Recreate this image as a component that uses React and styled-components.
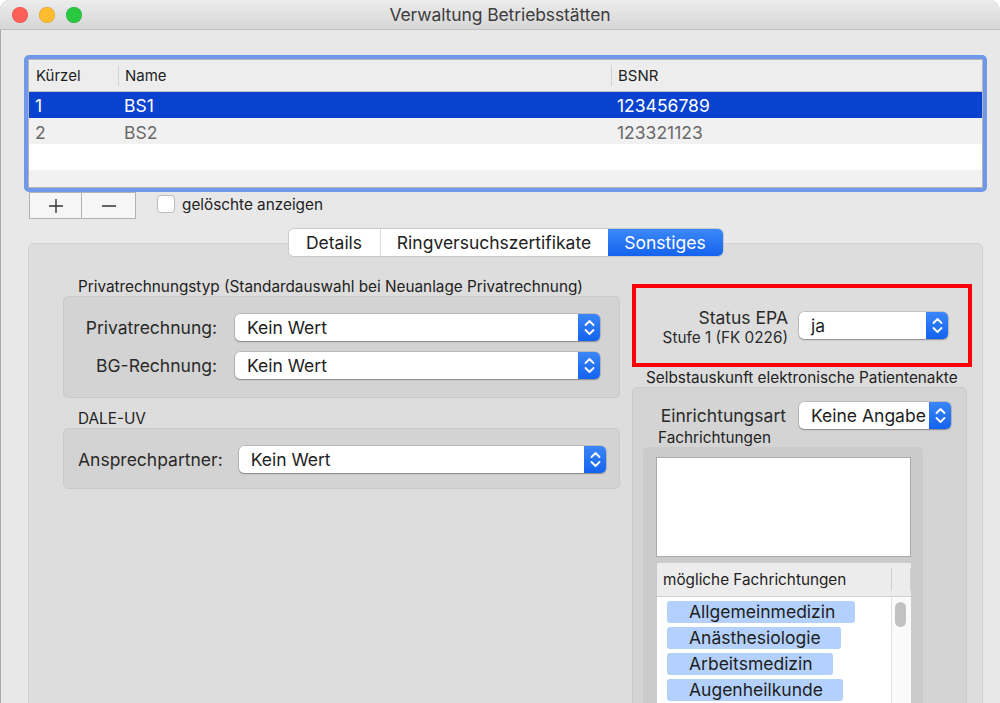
import React from "react";
import styled, { createGlobalStyle } from "styled-components";

const GlobalStyle = createGlobalStyle`
  html, body { margin: 0; padding: 0; background: #ffffff; overflow: hidden; }
  body { font-family: Inter, "Noto Sans", sans-serif; color: #222; }
  #root { width: 1000px; height: 703px; }
`;

const Window = styled.div`
  width: 1000px;
  height: 703px;
  background: #e8e8e8;
  border-radius: 10px 10px 0 0;
  overflow: hidden;
  display: flex;
  flex-direction: column;
  box-shadow: inset 1px 0 0 #a9a9a9;
`;

const TitleBar = styled.div`
  height: 29px;
  flex: none;
  border-bottom: 1px solid #bfbfbf;
  background: linear-gradient(#ececec, #d6d6d6);
  display: grid;
  grid-template-columns: 1fr auto 1fr;
  align-items: center;
`;

const Lights = styled.div`
  display: flex;
  gap: 11px;
  padding-left: 12px;
`;

const Light = styled.span`
  width: 16px;
  height: 16px;
  border-radius: 50%;
  background: ${(p) => p.$c};
  box-shadow: inset 0 0 0 0.5px rgba(0, 0, 0, 0.15);
`;

const Title = styled.div`
  font-size: 17.5px;
  color: #3d3d3d;
  letter-spacing: -0.1px;
`;

const Content = styled.div`
  flex: 1;
  padding-top: 25px;
  display: flex;
  flex-direction: column;
`;

const TableFrame = styled.div`
  margin-left: 24px;
  width: 963px;
  height: 137px;
  box-sizing: border-box;
  border: 4px solid #7098ea;
  border-radius: 5px;
  background: #fff;
  display: flex;
  flex-direction: column;
`;

const TableInner = styled.div`
  flex: 1;
  border: 1px solid #b4b4b4;
  overflow: hidden;
`;

const Grid = styled.div`
  display: grid;
  grid-template-columns: 89px 493px 1fr;
  height: ${(p) => p.$h}px;
  background: ${(p) => p.$bg};
  color: ${(p) => p.$fg || "#222"};
  box-sizing: border-box;
  align-items: center;
  ${(p) => (p.$header ? "border-bottom: 1px solid #c4c4c4;" : "")}
`;

const HeadCell = styled.div`
  position: relative;
  height: 100%;
  display: flex;
  align-items: center;
  padding-left: 7px;
  font-size: 15px;
  color: #1e1e1e;
  &::before {
    content: "";
    display: ${(p) => (p.$sep ? "block" : "none")};
    position: absolute;
    left: 0;
    top: 5px;
    bottom: 5px;
    width: 1px;
    background: #d2d2d2;
  }
`;

const Cell = styled.div`
  padding-left: 6px;
  font-size: 17.5px;
  padding-top: ${(p) => p.$pt || 0}px;
`;

const ButtonRow = styled.div`
  display: flex;
  align-items: center;
  margin-left: 29px;
  height: 27px;
`;

const SquareButton = styled.div`
  width: 53px;
  height: 27px;
  box-sizing: border-box;
  border: 1px solid #b3b3b3;
  background: #f6f6f6;
  display: flex;
  align-items: center;
  justify-content: center;
  & + & { margin-left: -1px; width: 55px; }
`;

const Check = styled.span`
  width: 18px;
  height: 18px;
  box-sizing: border-box;
  border: 1px solid #bcbcbc;
  border-radius: 4px;
  background: #fff;
  margin-left: 21px;
  margin-top: -3px;
`;

const CheckLabel = styled.span`
  margin-left: 7px;
  margin-top: -3px;
  font-size: 15.3px;
  color: #222;
`;

const TabArea = styled.div`
  margin-left: 28px;
  width: 955px;
  margin-top: 10px;
  display: flex;
  flex-direction: column;
  align-items: center;
`;

const Segmented = styled.div`
  position: relative;
  z-index: 1;
  display: flex;
  height: 27px;
  border-radius: 5px;
  background: #fff;
  box-shadow: 0 0 0 1px #c9c9c9, 0 1px 1px rgba(0, 0, 0, 0.15);
  overflow: hidden;
`;

const Segment = styled.div`
  width: ${(p) => p.$w}px;
  display: flex;
  align-items: center;
  justify-content: center;
  font-size: 17.5px;
  color: ${(p) => (p.$active ? "#fff" : "#222")};
  background: ${(p) => (p.$active ? "linear-gradient(#3c88f8, #1563ef)" : "#fff")};
  border-left: ${(p) => (p.$first || p.$active ? "none" : "1px solid #dadada")};
  box-sizing: border-box;
`;

const TabBox = styled.div`
  align-self: stretch;
  margin-top: -13px;
  height: 480px;
  background: #dddddd;
  border: 1px solid #d0d0d0;
  border-radius: 6px;
  display: grid;
  grid-template-columns: 557px 340px;
  column-gap: 12px;
  align-items: start;
  padding: 34px 0 0 34px;
`;

const Column = styled.div`
  display: flex;
  flex-direction: column;
`;

const Heading = styled.div`
  font-size: 15.3px;
  line-height: 18px;
  color: #222;
  white-space: nowrap;
  padding-left: ${(p) => p.$indent || 0}px;
  margin-top: ${(p) => p.$mt || 0}px;
`;

const GroupBox = styled.div`
  background: ${(p) => p.$bg || "#d3d3d3"};
  border: 1px solid #cacaca;
  border-radius: 5px;
  box-sizing: border-box;
`;

const FormGrid = styled.div`
  display: grid;
  grid-template-columns: ${(p) => p.$cols};
  column-gap: ${(p) => p.$gap}px;
  row-gap: 11px;
  align-items: center;
  padding: ${(p) => p.$pad};
`;

const Label = styled.div`
  font-size: 17.5px;
  color: #2a2a2a;
  text-align: right;
  white-space: nowrap;
`;

const PopupBox = styled.div`
  display: flex;
  height: 27px;
  width: ${(p) => (p.$w ? `${p.$w}px` : "auto")};
  background: #fff;
  border-radius: 5px;
  box-shadow: 0 0 0 0.5px rgba(0, 0, 0, 0.22), 0 1px 1.5px rgba(0, 0, 0, 0.28);
  overflow: hidden;
`;

const PopupText = styled.div`
  flex: 1;
  min-width: 0;
  padding-left: 12px;
  font-size: 17.5px;
  line-height: 27px;
  color: #1e1e1e;
  white-space: nowrap;
  overflow: hidden;
`;

const Stepper = styled.div`
  width: 22px;
  flex: none;
  background: linear-gradient(#3a86f8, #1463ef);
  display: flex;
  align-items: center;
  justify-content: center;
`;

const Popup = ({ value, w }) => (
  <PopupBox $w={w}>
    <PopupText>{value}</PopupText>
    <Stepper>
      <svg width="11" height="17" viewBox="0 0 11 17">
        <polyline points="1.5,6 5.5,2 9.5,6" fill="none" stroke="#fff" strokeWidth="1.8" strokeLinecap="round" strokeLinejoin="round" />
        <polyline points="1.5,11 5.5,15 9.5,11" fill="none" stroke="#fff" strokeWidth="1.8" strokeLinecap="round" strokeLinejoin="round" />
      </svg>
    </Stepper>
  </PopupBox>
);

const RedBox = styled.div`
  margin-top: 6px;
  height: 83px;
  box-sizing: border-box;
  border: 4px solid #fb0007;
  display: flex;
  align-items: center;
  justify-content: flex-end;
  gap: 11px;
  padding-right: 20px;
`;

const LabelStack = styled.div`
  display: flex;
  flex-direction: column;
  align-items: flex-end;
  margin-top: 3px;
`;

const BigLabel = styled.div`
  font-size: 17.5px;
  line-height: 21px;
  color: #2a2a2a;
`;

const SmallLabel = styled.div`
  font-size: 15.3px;
  line-height: 20px;
  color: #2a2a2a;
`;

const RightGroup = styled(GroupBox)`
  width: 335px;
  height: 340px;
  background: #d4d4d4;
  padding-top: 14px;
`;

const EinrichtungRow = styled.div`
  display: flex;
  align-items: center;
  justify-content: flex-end;
  gap: 13px;
  padding-right: 15px;
`;

const InnerBox = styled.div`
  margin-left: 10px;
  width: 280px;
  height: 300px;
  background: #cbcbcb;
  border-radius: 5px;
  padding: 10px 12px 0 13px;
  box-sizing: border-box;
  display: flex;
  flex-direction: column;
`;

const WhiteList = styled.div`
  height: 100px;
  background: #fff;
  border: 1px solid #a9a9a9;
  box-sizing: border-box;
`;

const ListTable = styled.div`
  margin-top: 6px;
  background: #fff;
  flex: 1;
  display: flex;
  flex-direction: column;
  border-left: 1px solid #c9c9c9;
`;

const ListHeader = styled.div`
  height: 33px;
  flex: none;
  background: #ececec;
  border-bottom: 1px solid #d2d2d2;
  display: grid;
  grid-template-columns: 1fr 20px;
  align-items: center;
  font-size: 15.3px;
  color: #1e1e1e;
`;

const ListHeadCell = styled.div`
  padding-left: 6px;
  height: 23px;
  display: flex;
  align-items: center;
  & + & { border-left: 1px solid #cfcfcf; padding-left: 0; }
  border-right: ${(p) => (p.$last ? "1px solid #cfcfcf" : "none")};
`;

const ListBody = styled.div`
  flex: 1;
  display: grid;
  grid-template-columns: 1fr 20px;
`;

const Items = styled.div`
  display: flex;
  flex-direction: column;
  align-items: flex-start;
  gap: 4px;
  padding: 4px 0 0 10px;
`;

const Pill = styled.div`
  height: 22px;
  line-height: 22px;
  padding: 0 20px 0 22px;
  background: #b3d1fc;
  border-radius: 3px;
  font-size: 17.5px;
  color: #1e1e1e;
`;

const ScrollTrack = styled.div`
  border-left: 1px solid #e2e2e2;
  background: #fafafa;
  padding: 5px 0 0 3px;
`;

const Thumb = styled.div`
  width: 11px;
  height: 25px;
  border-radius: 6px;
  background: #c2c2c2;
`;

const rows = [
  { k: "1", n: "BS1", b: "123456789", bg: "#0842cf", fg: "#fff" },
  { k: "2", n: "BS2", b: "123321123", bg: "#f1f1f1", fg: "#6a6a6a", pt: 2 },
  { k: "", n: "", b: "", bg: "#ffffff" },
  { k: "", n: "", b: "", bg: "#f1f1f1" },
];

const fachrichtungen = ["Allgemeinmedizin", "Anästhesiologie", "Arbeitsmedizin", "Augenheilkunde"];

export default function App() {
  return (
    <>
      <GlobalStyle />
      <Window>
        <TitleBar>
          <Lights>
            <Light $c="#fe5f57" />
            <Light $c="#febc2e" />
            <Light $c="#29c840" />
          </Lights>
          <Title>Verwaltung Betriebsstätten</Title>
          <div />
        </TitleBar>
        <Content>
          <TableFrame>
            <TableInner>
              <Grid $h={32} $bg="#ededed" $header>
                <HeadCell>Kürzel</HeadCell>
                <HeadCell $sep>Name</HeadCell>
                <HeadCell $sep>BSNR</HeadCell>
              </Grid>
              {rows.map((r, i) => (
                <Grid key={i} $h={26} $bg={r.bg} $fg={r.fg}>
                  <Cell $pt={r.pt}>{r.k}</Cell>
                  <Cell $pt={r.pt}>{r.n}</Cell>
                  <Cell $pt={r.pt}>{r.b}</Cell>
                </Grid>
              ))}
            </TableInner>
          </TableFrame>

          <ButtonRow>
            <SquareButton>
              <svg width="16" height="16" viewBox="0 0 16 16">
                <path d="M8 1v14M1 8h14" stroke="#333" strokeWidth="1.4" />
              </svg>
            </SquareButton>
            <SquareButton>
              <svg width="16" height="16" viewBox="0 0 16 16">
                <path d="M1 8h14" stroke="#333" strokeWidth="1.4" />
              </svg>
            </SquareButton>
            <Check />
            <CheckLabel>gelöschte anzeigen</CheckLabel>
          </ButtonRow>

          <TabArea>
            <Segmented>
              <Segment $w={91} $first>Details</Segment>
              <Segment $w={228}>Ringversuchszertifikate</Segment>
              <Segment $w={115} $active>Sonstiges</Segment>
            </Segmented>
            <TabBox>
              <Column>
                <Heading $indent={15}>
                  Privatrechnungstyp (Standardauswahl bei Neuanlage Privatrechnung)
                </Heading>
                <GroupBox>
                  <FormGrid $cols="134px 1fr" $gap={18} $pad="17px 19px 18px 19px">
                    <Label>Privatrechnung:</Label>
                    <Popup value="Kein Wert" />
                    <Label>BG-Rechnung:</Label>
                    <Popup value="Kein Wert" />
                  </FormGrid>
                </GroupBox>
                <Heading $indent={15} $mt={12}>DALE-UV</Heading>
                <GroupBox>
                  <FormGrid $cols="auto 1fr" $gap={16} $pad="17px 13px 15px 14px">
                    <Label>Ansprechpartner:</Label>
                    <Popup value="Kein Wert" />
                  </FormGrid>
                </GroupBox>
              </Column>

              <Column>
                <RedBox>
                  <LabelStack>
                    <BigLabel>Status EPA</BigLabel>
                    <SmallLabel>Stufe 1 (FK 0226)</SmallLabel>
                  </LabelStack>
                  <Popup value="ja" w={149} />
                </RedBox>
                <Heading $indent={14} $mt={2}>
                  Selbstauskunft elektronische Patientenakte
                </Heading>
                <RightGroup>
                  <EinrichtungRow>
                    <Label>Einrichtungsart</Label>
                    <Popup value="Keine Angabe" w={152} />
                  </EinrichtungRow>
                  <Heading $indent={25}>Fachrichtungen</Heading>
                  <InnerBox>
                    <WhiteList />
                    <ListTable>
                      <ListHeader>
                        <ListHeadCell>mögliche Fachrichtungen</ListHeadCell>
                        <ListHeadCell $last />
                      </ListHeader>
                      <ListBody>
                        <Items>
                          {fachrichtungen.map((f) => (
                            <Pill key={f}>{f}</Pill>
                          ))}
                        </Items>
                        <ScrollTrack>
                          <Thumb />
                        </ScrollTrack>
                      </ListBody>
                    </ListTable>
                  </InnerBox>
                </RightGroup>
              </Column>
            </TabBox>
          </TabArea>
        </Content>
      </Window>
    </>
  );
}
